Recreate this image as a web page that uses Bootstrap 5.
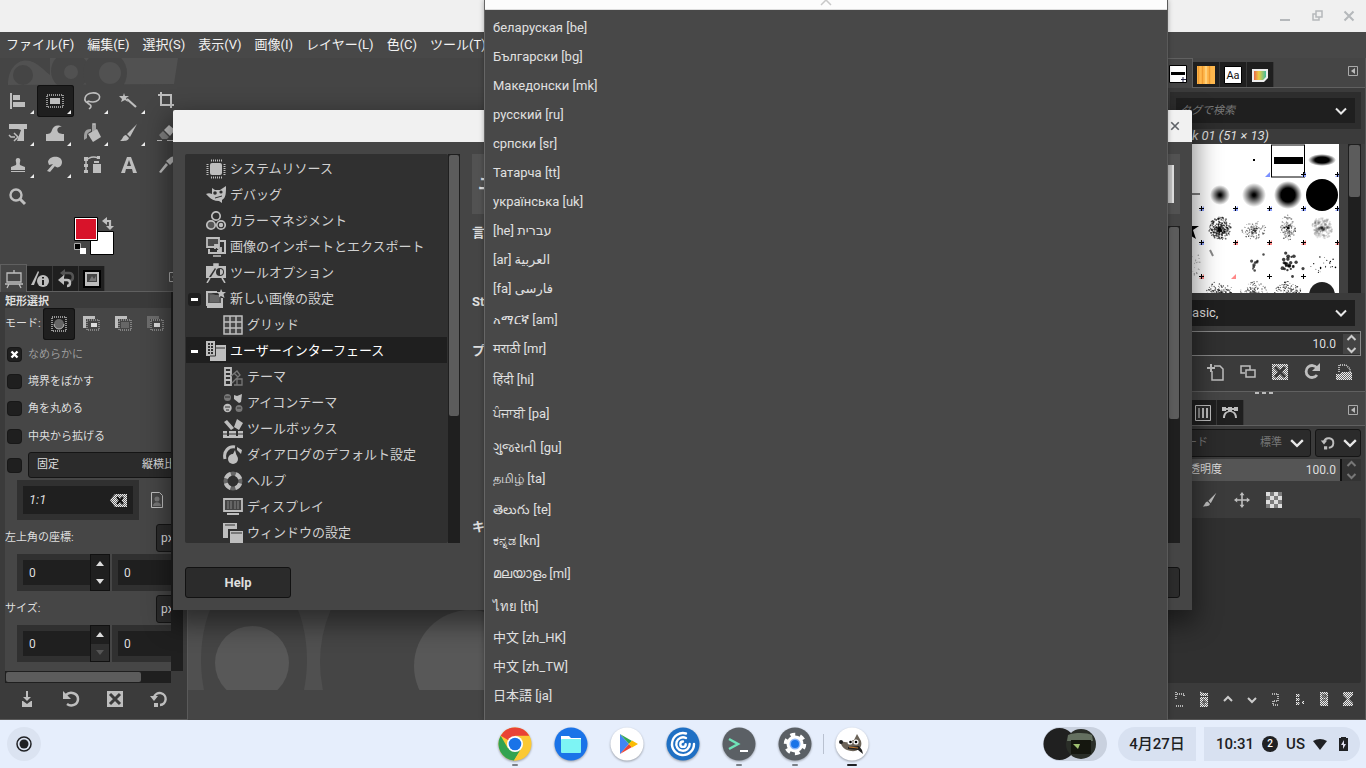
<!DOCTYPE html>
<html lang="ja">
<head>
<meta charset="utf-8">
<meta name="viewport" content="width=device-width, initial-scale=1">
<title>GIMP</title>
<link href="https://cdn.jsdelivr.net/npm/bootstrap@5.3.0/dist/css/bootstrap.min.css" rel="stylesheet">
<script src="https://cdn.jsdelivr.net/npm/bootstrap@5.3.0/dist/js/bootstrap.bundle.min.js"></script>
<style>
body{font-family:Roboto,"Noto Sans CJK JP","Noto Sans","DejaVu Sans",sans-serif;font-size:13px;line-height:20px;background:#454545;color:#dedede;height:100vh;overflow:hidden}
button,input,select{font:inherit;color:inherit}
button{background:none;border:0;padding:0}
svg{display:block;flex:none}
.ic{width:20px;height:20px;fill:#bebebe;stroke:none;color:#bebebe}
.sm{width:16px;height:16px}
.titlebar{height:32px;background:#f0f0f0;color:#b5b8bb;padding-right:1px}
.titlebar button{width:32px;display:flex;justify-content:center}
.menubar{height:26px;background:#484848;padding-left:6px;gap:13px;color:#f2f2f2}
.menubar a{color:inherit;text-decoration:none;white-space:nowrap}
.shelf{height:48px;background:#e6eefc;color:#202124;position:relative;z-index:30}
.dock-l{width:188px}
.dock-r{width:200px;background:#3b3b3b;border-right:1px solid #555;border-bottom:1px solid #555;font-size:12px}
.wm{height:27px}
.tools{display:grid;grid-template-columns:repeat(5,37px);grid-auto-rows:32px}
.tool{position:relative;display:flex;align-items:center;padding-left:8px;border-radius:3px}
.tool.more::after{content:"";position:absolute;right:3px;bottom:3px;border-left:4px solid transparent;border-bottom:4px solid #eee}
.on{background:#1f1f1f;box-shadow:inset 0 0 0 1px #111;border-radius:3px}
.swatches{height:51px;padding:1px 0 0 72px}
.tabs{height:28px;border-bottom:1px solid #606060;background:#454545;align-items:flex-end}
.tabs button{width:26px;height:25px;background:#1f1f1f;border-right:1px solid #383838;display:flex;align-items:center;justify-content:center}
.tabs button.cur{height:28px;width:27px;background:#454545;border:1px solid #606060;border-bottom:0;margin-bottom:-1px}
.dock-r .tabs button{width:27px}
.dock-r .tabs button.cur{height:30px;padding-right:4px}
.opts{background:#3b3b3b;padding-left:5px;font-size:11px;line-height:16px;border-right:1px solid #5a5a5a;border-bottom:1px solid #5a5a5a}
.optbody{background:#464646;overflow:hidden;width:166px}
.optbody>*{flex:none}
.strip{background:#3b3b3b;height:16px;font-weight:700;line-height:20px}
.modes button{width:32px;height:32px;display:flex;align-items:center;justify-content:center}
.tick{appearance:none;width:13px;height:13px;background:#1f1f1f;border-radius:3px;box-shadow:0 0 0 1px #181818;margin:0 7px 0 3px;flex:none}
.tick:checked{background:#1f1f1f url("data:image/svg+xml,%3Csvg xmlns='http://www.w3.org/2000/svg' viewBox='0 0 13 13'%3E%3Cpath d='M3.500 3.500l6 6m0-6l-6 6' stroke='white' stroke-width='2.400'/%3E%3C/svg%3E")}
.row28{height:28px;display:flex;align-items:center}
.row28 label{padding-top:2px}
.combo{background:#2b2b2b;border:1px solid #151515;border-radius:3px;display:flex;align-items:center}
.combo.unit{width:60px;height:28px;font-size:12px}
.field{background:#1f1f1f;border:6px solid #303030;padding:0 6px;color:#dedede;border-radius:0;min-width:0;font-size:12px}
.spin{width:20px;background:#1f1f1f;border:1px solid #111}
.spin button{height:50%;display:flex;align-items:center;justify-content:center;width:100%}
.spinrow{height:37px;margin-top:2px}
.hbar{height:12px;background:#1f1f1f;width:166px}
.hbar div{width:135px;height:10px;background:#5c5c5c;border-radius:2px;margin:1px}
.foot{height:36px;padding-bottom:4px}
.foot button{width:44px;display:flex;justify-content:center}
.canvas-art{height:100px;margin-bottom:30px}
.dialog-w{position:absolute;left:173px;right:174px;top:110px;height:500px;background:#454545;box-shadow:0 10px 24px 4px rgba(0,0,0,.45);z-index:10}
.dlg-title{height:32px;background:#f1f1f1;border-radius:2px 2px 0 0;color:#5f6368}
.dlg-body{padding:12px;gap:12px}
.tree{width:263px;height:389px;background:#303030;overflow:hidden;padding:1px;border-radius:2px}
.tree button{height:26px;width:100%;display:flex;align-items:center;text-align:left;gap:4px;padding:2px 0 0 2px;color:#d0d0d0}
.tree .exp{width:13px;height:13px;background:#1f1f1f;border-radius:3px;display:flex;align-items:center;justify-content:center;margin-right:1px}
.tree .exp::before{content:"";width:7px;height:3px;background:#fff}
.tree .pad{width:13px;margin-right:1px}
.tree .sub .pad{width:30px}
.tree .sel{background:#1f1f1f;color:#fff}
.vbar{width:12px;background:#1f1f1f;padding:1px 1px 0}
.vbar div{background:#5c5c5c;border-radius:2px}
.dbtn{width:106px;height:31px;background:#2b2b2b;border:1px solid #121212;border-radius:3px;font-weight:700;color:#dedede}
.prefhead{height:60px;background:#525252;padding:0 6px;font-size:17px;font-weight:700}
.prefhead i{width:40px;height:38px;background:#bebebe;border-right:2px solid #ddd}
.secs{font-weight:700}
.popup{position:absolute;left:484px;right:198px;top:0;bottom:48px;background:#484848;border-left:1px solid #666;border-right:1px solid #5a5a5a;z-index:20;box-shadow:0 0 5px rgba(0,0,0,.3)}
.scrollup{height:10px;background:#fcfcfc;border-bottom:1px solid #ddd;width:100%;display:flex;justify-content:center;align-items:flex-start}
.lang{height:29px;width:100%;padding:0 8px 1px;display:flex;align-items:flex-end;color:#e0e0e0;line-height:20px}
.lang.h31{height:31px}.lang.h33{height:33px}.lang.h34{height:34px}
.tagbox{height:37px;width:191px;background:#1f1f1f;border:6px solid #2d2d2d}
.tagbox input{background:none;border:0;width:155px;padding:0 0 0 4px;font-style:italic;font-size:11px;outline:0}
.tagbox input::placeholder{color:#777;opacity:1}
.bname{width:103px;height:15px;line-height:14px;font-size:13px;white-space:nowrap}
.dsel{background:#1f1f1f;height:26px;width:185px;margin-top:7px;padding:0 8px 0 14px;font-size:13px}
.opac{background:#555;height:22px;padding-left:12px;font-size:11px}
.iconrow button{width:32px;display:flex;justify-content:center}
.iconrow.tight button{width:24px}
.app{width:56px;height:48px;display:flex;flex-direction:column;align-items:center;padding-top:7px;gap:3px}
.app svg{width:34px;height:34px;filter:drop-shadow(0 1px 1px rgba(0,0,0,.35))}
.app::after{content:"";width:6px;height:2px;background:transparent;border-radius:1px}
.app.run::after{background:#7a7f87}
.app.act::after{background:#202124;width:10px}
.sep{width:1px;height:20px;background:#b9c1d0}
.pill{background:#d8e1f1;height:34px;font-size:15px;font-weight:500;color:#202124}
.launch{width:34px;height:34px;border-radius:50%;background:#dbe3f1;margin-left:7px;display:flex;align-items:center;justify-content:center}
.nbadge{width:16px;height:16px;border-radius:50%;background:#202124;color:#fff;font-size:10px;line-height:16px;text-align:center}
</style>
</head>
<body class="d-flex flex-column position-relative">
<svg width="0" height="0" class="position-absolute">
<defs>
<pattern id="dz" width="2" height="2" patternUnits="userSpaceOnUse"><rect width="2" height="2" fill="#666"/><path d="M0 0h1v1H0zM1 1h1v1H1z" fill="#eee"/></pattern>
<symbol id="align" viewBox="0 0 20 20"><path d="M2 2h2v16H2zM5 4h7v5H5zM5 11h12v5H5z"/></symbol>
<symbol id="rect" viewBox="0 0 20 20"><path d="M2 4h16v12H2z" fill="none" stroke="currentColor" stroke-width="1.500" stroke-dasharray="1 1"/><path d="M5 7h10v6H5z"/></symbol>
<symbol id="lasso" viewBox="0 0 20 20"><path d="M6 12C1 10 2 3 10 2c10-1 10 8 1 9-3 0-5-1-5-1m0 0c-2 3 3 3 3 5s-1 2-2 3" fill="none" stroke="currentColor" stroke-width="1.600"/></symbol>
<symbol id="wand" viewBox="0 0 20 20"><path d="M5 2l1 3 4 0-3 2 2 4-3-2-4 2 1-3-3-3 4 0z"/><path d="M8 8l9 8" stroke="currentColor" stroke-width="2.200"/></symbol>
<symbol id="crop" viewBox="0 0 20 20"><path d="M5 1v13h13M2 4h13v13" fill="none" stroke="currentColor" stroke-width="2"/></symbol>
<symbol id="unified" viewBox="0 0 20 20"><path d="M1 1h18v5h-3v12H9l4-11-3-1H1z"/><path d="M1 12l2 2h4M6 10l4 4-4 4" fill="none" stroke="currentColor" stroke-width="1.500"/></symbol>
<symbol id="warp" viewBox="0 0 20 20"><path d="M1 18v-7c4 0 5-1 6-4 1-4 6-6 10-3-3-1-6 2-4 5 1 2 6 2 6 2v7z"/></symbol>
<symbol id="bucket" viewBox="0 0 20 20"><path d="M6 11l9-5 4 8-8 5-2-3z"/><path d="M11 10V1h2v8" fill="none" stroke="currentColor" stroke-width="1.500"/><path d="M9 6c-7 0-7 4-7 11l3-2c0-4 0-5 4-7z" opacity=".75"/></symbol>
<symbol id="brush" viewBox="0 0 20 20"><path d="M18 1L8 11l3 3zM7 12c-3 0-3 4-6 6 5 0 8 0 9-3z"/></symbol>
<symbol id="eraser" viewBox="0 0 20 20"><path d="M8 7l5-5 6 5-5 6z"/><path d="M3 12l4-4 6 6-2 2H6z" opacity=".5"/><path d="M1 17h5v1H1zM11 17h8v1h-8z"/></symbol>
<symbol id="stamp" viewBox="0 0 20 20"><path d="M8 4a2.500 2.500 0 0 1 4 0c1 2-1 4 0 6l5 2v3H3v-3l5-2c1-2-1-4 0-6zM3 16h14v1H3z"/></symbol>
<symbol id="smudge" viewBox="0 0 20 20"><path d="M3 7C4 0 17 0 17 7c0 5-5 7-7 4l-5 6-3-1 6-7-4 1z"/></symbol>
<symbol id="pathi" viewBox="0 0 20 20"><path d="M4 4v14M4 6c2-4 8-5 12-3" fill="none" stroke="currentColor" stroke-width="1.500"/><path d="M2 2h4v4H2zM2 9h4v3H2zM2 15h4v3H2zM15 1h3v3h-3zM12 6h5v2h-5zM11 9h8v9h-8z"/></symbol>
<symbol id="texti" viewBox="0 0 20 20"><path d="M2 18L8 2h4l6 16h-4l-1-4H7l-1 4zM8 11h4l-2-6z"/></symbol>
<symbol id="picker" viewBox="0 0 20 20"><path d="M19 1l-4 1-5 4 4 4 5-5zM10 8l2 2-7 8-2-1z"/></symbol>
<symbol id="zoomi" viewBox="0 0 20 20"><circle cx="8" cy="8" r="5.500" fill="none" stroke="currentColor" stroke-width="2.400"/><path d="M12 12l5 5" stroke="currentColor" stroke-width="3"/></symbol>
<symbol id="easel" viewBox="0 0 20 20"><path d="M3 4h14v9H3zM10 1v3M1 15h18M5 15l-2 4M15 15l2 4" fill="none" stroke="currentColor" stroke-width="1.300"/></symbol>
<symbol id="info" viewBox="0 0 20 20"><path d="M1 16L8 2l1 1-5 13z"/><circle cx="13" cy="12" r="6"/><path d="M12 8h2v1.500h-2zM12 11h2v5h-2z" fill="#1f1f1f"/></symbol>
<symbol id="hist" viewBox="0 0 20 20"><path d="M8 4h5c5 0 5 7 1 8" fill="none" stroke="#555" stroke-width="2.500"/><path d="M9 0v8L4 4z" fill="#555"/><path d="M6 11h5c4 0 4 6 0 6" fill="none" stroke="currentColor" stroke-width="2.500"/><path d="M2 11l6-5v10z"/></symbol>
<symbol id="pic" viewBox="0 0 20 20"><path d="M1 1h18v18H1z" fill="#000"/><path d="M3 3h14v14H3z"/><path d="M5 5h10v8H5z" fill="#454545"/><path d="M7 12l3-5 2 3 2-3v5z" fill="#777"/></symbol>
<symbol id="selr" viewBox="0 0 20 20"><path d="M3 3h14v14H3z" fill="none" stroke="currentColor" stroke-width="1.500" stroke-dasharray="1 1"/><circle cx="10" cy="10" r="5" fill="#666"/><path d="M5 10a5 5 0 0 0 10 0" fill="none" stroke="currentColor"/></symbol>
<symbol id="chip" viewBox="0 0 20 20"><rect x="4" y="4" width="12" height="12" rx="2"/><path d="M5 1.500h11M5 18.500h11" stroke="currentColor" stroke-width="2" stroke-dasharray="1 1"/><path d="M1.500 5v11M18.500 5v11" stroke="currentColor" stroke-width="2" stroke-dasharray="1 1"/></symbol>
<symbol id="wilber" viewBox="0 0 20 20"><path d="M0 9c2-1 4-1 6 0l0-6 3 2h5l6-4c0 7 0 12-4 14l0 3-3-2c-5 0-8-2-10-4z"/><circle cx="9" cy="8" r="1.800" fill="#303030"/><circle cx="15" cy="7" r="1.600" fill="#303030"/><path d="M9 13l7-2" stroke="#303030"/></symbol>
<symbol id="rgb" viewBox="0 0 20 20"><g fill="none" stroke="currentColor" stroke-width="1.700"><circle cx="10" cy="5" r="4.200"/><circle cx="5" cy="14" r="4.200" fill="#555"/><circle cx="15" cy="14" r="4.200"/></g><circle cx="15" cy="14" r="2.200"/></symbol>
<symbol id="impexp" viewBox="0 0 20 20"><path d="M3 12v4h16V4h-5" fill="none" stroke="currentColor" stroke-width="2"/><path d="M1 1h12v9H1z" fill="#4b4b4b" stroke="currentColor" stroke-width="1.800"/><path d="M7 19h8" stroke="currentColor" stroke-width="1.500"/><path d="M9 8l6 6m0-4v4h-4M9 12V8h4" fill="none" stroke="currentColor" stroke-width="1.800"/></symbol>
<symbol id="topt" viewBox="0 0 20 20"><path d="M0 3h20v12H0z"/><path d="M3 14L9 5l1 1-5 8z" fill="#303030"/><circle cx="14" cy="9" r="4" fill="#303030"/><path d="M14 6a3 3 0 0 1 0 6z"/><path d="M8 1h4v2H8zM4 15l-3 5M16 15l3 5" stroke="currentColor" stroke-width="1.500"/></symbol>
<symbol id="newimg" viewBox="0 0 20 20"><path d="M1 3h10M1 2v14h15V9" fill="#555" stroke="currentColor" stroke-width="2"/><path d="M1 14h16v5H1zM15 0l1.500 3H20l-2.500 2 1 4L15 7l-3 2 1-4-3-2h4z"/><path d="M4 6h9v7H4z" fill="#666"/></symbol>
<symbol id="grid" viewBox="0 0 20 20"><path d="M1 1h18v18H1zM7 1v18M13 1v18M1 7h18M1 13h18" fill="#484848" stroke="currentColor" stroke-width="1.500"/></symbol>
<symbol id="uii" viewBox="0 0 20 20"><path d="M0 0h9v15H0z"/><path d="M2 3h5M2 6h5M2 9h5M2 12h5" stroke="#303030" stroke-width="2" stroke-dasharray="2 1"/><path d="M9 4h11v16H4v-5h5z"/><path d="M10 7h9M9.500 4v11H4" stroke="#333" fill="none"/></symbol>
<symbol id="theme" viewBox="0 0 20 20"><path d="M2 1h6v17H2zM2 5h6M2 9h6M2 13h6" fill="none" stroke="currentColor" stroke-width="1.800"/><path d="M8 9l6-5 3 4-8 8M11 18h8v-6h-5M14 12v6M11 6l4 4" fill="none" stroke="#777" stroke-width="1.300"/></symbol>
<symbol id="icoth" viewBox="0 0 20 20"><circle cx="4.500" cy="4.500" r="3.500" fill="#777"/><path d="M11 2l3 1 5-2-1 8-2 1-5-4z"/><circle cx="4.500" cy="15" r="4.200"/><circle cx="16" cy="15.500" r="3.500" fill="#777"/><path d="M2 4h5M2 14h5M3 17h3M14 15h4" stroke="#303030"/></symbol>
<symbol id="tbox" viewBox="0 0 20 20"><path d="M0 12h20v7H0zM1 3l3-2 7 8-3 2zM11 8L14 0l6 4-4 7z"/><path d="M0 15h20" stroke="#303030"/><path d="M5 12v5M14 12v5" stroke="#303030" stroke-width="2"/></symbol>
<symbol id="reset2" viewBox="0 0 20 20"><path d="M2 14C0 6 6 1 12 2" fill="none" stroke="currentColor" stroke-width="3"/><circle cx="10" cy="14" r="5"/><path d="M9 11l3-6 2 7zM14 2l5 3-1 4-4-4z"/></symbol>
<symbol id="helpi" viewBox="0 0 20 20"><circle cx="10" cy="10" r="7.500" fill="none" stroke="#666" stroke-width="4"/><circle cx="10" cy="10" r="7.500" fill="none" stroke="currentColor" stroke-width="4" stroke-dasharray="6.800 5" stroke-dashoffset="-2.500"/></symbol>
<symbol id="disp" viewBox="0 0 20 20"><path d="M1 2h18v12H1z" fill="#444" stroke="currentColor" stroke-width="1.800"/><path d="M5 4v8M8 4v8M12 4v8M15 4v8" stroke="#777" stroke-width="1.300"/><path d="M4 16h12v2H4z"/></symbol>
<symbol id="wins" viewBox="0 0 20 20"><path d="M0 0h14v6H5v9H0z"/><path d="M7 8h13v12H7z"/><path d="M2 2h10M8 10h11" stroke="#333"/></symbol>
<symbol id="save" viewBox="0 0 20 20"><path d="M9 2h2v6h3l-4 4-4-4h3zM5 12h1l4 3 4-3h1v5H5zM5 16h10v2H5z"/></symbol>
<symbol id="undo" viewBox="0 0 20 20"><path d="M5 6c4-4 12-2 12 4s-7 8-11 5" fill="none" stroke="currentColor" stroke-width="2.500"/><path d="M2 2v8h8z"/></symbol>
<symbol id="del" viewBox="0 0 20 20"><path d="M2 2h16v16H2z"/><path d="M5 5l10 10M15 5L5 15" stroke="#3b3b3b" stroke-width="3"/></symbol>
<symbol id="reset" viewBox="0 0 20 20"><path d="M5 8a6 6 0 1 1 6 8" fill="none" stroke="currentColor" stroke-width="2.400"/><path d="M1 7h8l-4 5zM5 14h4v4H5z"/></symbol>
<symbol id="redo" viewBox="0 0 20 20"><path d="M15 13a6 6 0 1 1 0-7" fill="none" stroke="currentColor" stroke-width="2.800"/><path d="M18 1v8h-8z"/></symbol>
<symbol id="newdoc" viewBox="0 0 20 20"><path d="M8 4h6l3 3v11H6V9" fill="none" stroke="currentColor" stroke-width="1.500"/><path d="M4 2h2v3h3v2H6v3H4V7H1V5h3z"/></symbol>
<symbol id="dup" viewBox="0 0 20 20"><path d="M7 11H3V4h9v4M8 8h9v7H8z" fill="none" stroke="currentColor" stroke-width="1.500"/></symbol>
<symbol id="openi" viewBox="0 0 20 20"><path d="M5 10V3h7l4 4v3" fill="none" stroke="#ddd" stroke-width="1.500" stroke-dasharray="1 1"/><path d="M2 12h4l2-2h10v8H2z" fill="url(#dz)"/></symbol>
<symbol id="menuarr" viewBox="0 0 12 12"><path d="M1.500 1.500h9v9h-9z" fill="none" stroke="#aaa"/><path d="M8 3v6L4 6z" fill="#bbb"/></symbol>
<symbol id="chev" viewBox="0 0 12 12"><path d="M1 3.500l5 5 5-5" fill="none" stroke="#e8e8e8" stroke-width="2"/></symbol>
<symbol id="ud" viewBox="0 0 10 20"><path d="M1 6l4-4 4 4M1 14l4 4 4-4" fill="none" stroke="currentColor" stroke-width="2"/></symbol>
<symbol id="movei" viewBox="0 0 20 20"><path d="M10 0l3 4h-2v5h5V7l4 3-4 3v-2h-5v5h2l-3 4-3-4h2v-5H4v2L0 10l4-3v2h5V4H7z"/></symbol>
<symbol id="cx" viewBox="0 0 12 12"><path d="M1.500 1.500l9 9m0-9l-9 9" stroke="currentColor" stroke-width="2"/></symbol>
</defs>
</svg>

<header class="titlebar d-flex align-items-center justify-content-end flex-shrink-0">
  <button aria-label="最小化"><svg width="10" height="12"><path d="M0 9h10v2H0z" fill="currentColor"/></svg></button>
  <button aria-label="元に戻す"><svg width="11" height="12" fill="none" stroke="currentColor" stroke-width="1.500"><path d="M4 1h6v6H4zM4 4H1v6h6V7"/></svg></button>
  <button aria-label="閉じる"><svg width="12" height="12"><use href="#cx"/></svg></button>
</header>
<nav class="menubar d-flex align-items-center flex-shrink-0">
  <a href="#">ファイル(F)</a><a href="#">編集(E)</a><a href="#">選択(S)</a><a href="#">表示(V)</a><a href="#">画像(I)</a><a href="#">レイヤー(L)</a><a href="#">色(C)</a><a href="#">ツール(T)</a>
</nav>

<main class="d-flex flex-fill overflow-hidden">
  <aside class="dock-l d-flex flex-column flex-shrink-0">
    <svg class="wm" width="187" height="27"><path d="M8 27C8 8 20 0 30 3s14 10 20 14V0h128l-4 26z" fill="#515151"/><circle cx="23" cy="17" r="10" fill="#454545"/><circle cx="70" cy="13" r="19" fill="#454545"/><circle cx="71" cy="14" r="7" fill="#515151"/><circle cx="105" cy="15" r="22" fill="#454545"/><circle cx="110" cy="15" r="11" fill="#515151"/></svg>
    <div class="tools">
      <button class="tool more" aria-label="整列"><svg class="ic"><use href="#align"/></svg></button>
      <button class="tool more on" aria-label="矩形選択"><svg class="ic"><use href="#rect"/></svg></button>
      <button class="tool more" aria-label="自由選択"><svg class="ic"><use href="#lasso"/></svg></button>
      <button class="tool more" aria-label="ファジー選択"><svg class="ic"><use href="#wand"/></svg></button>
      <button class="tool more" aria-label="切り抜き"><svg class="ic"><use href="#crop"/></svg></button>
      <button class="tool more" aria-label="統合変形"><svg class="ic"><use href="#unified"/></svg></button>
      <button class="tool more" aria-label="ワープ変形"><svg class="ic"><use href="#warp"/></svg></button>
      <button class="tool more" aria-label="塗りつぶし"><svg class="ic"><use href="#bucket"/></svg></button>
      <button class="tool more" aria-label="ブラシで描画"><svg class="ic"><use href="#brush"/></svg></button>
      <button class="tool" aria-label="消しゴム"><svg class="ic"><use href="#eraser"/></svg></button>
      <button class="tool more" aria-label="スタンプ"><svg class="ic"><use href="#stamp"/></svg></button>
      <button class="tool more" aria-label="にじみ"><svg class="ic"><use href="#smudge"/></svg></button>
      <button class="tool" aria-label="パス"><svg class="ic"><use href="#pathi"/></svg></button>
      <button class="tool" aria-label="テキスト"><svg class="ic"><use href="#texti"/></svg></button>
      <button class="tool" aria-label="スポイト"><svg class="ic"><use href="#picker"/></svg></button>
      <button class="tool" aria-label="ズーム"><svg class="ic"><use href="#zoomi"/></svg></button>
    </div>
    <div class="swatches"><svg width="48" height="42"><path d="M18.500 17.500h23v23h-23z" fill="#fff" stroke="#000"/><path d="M2.500 3.500h23v23h-23z" fill="#fff" stroke="#000"/><path d="M4 5h20v20H4z" fill="#d8132a"/><path d="M2.500 29.500h6v6h-6z" fill="#000" stroke="#aaa"/><path d="M8 34h6v6H8z" fill="#fff"/><path d="M34 7h4v7" fill="none" stroke="#bebebe" stroke-width="2.200"/><path d="M30 7l5-4v8zM38 16l-4-4h8z" fill="#bebebe"/></svg></div>
    <div class="tabs d-flex">
      <button class="cur" aria-label="ツールオプション"><svg class="ic"><use href="#easel"/></svg></button>
      <button aria-label="デバイスの状態"><svg class="ic"><use href="#info"/></svg></button>
      <button aria-label="作業履歴"><svg class="ic"><use href="#hist"/></svg></button>
      <button aria-label="画像"><svg class="ic"><use href="#pic"/></svg></button>
      <span class="flex-fill"></span><svg class="me-2 mb-2" width="12" height="12"><use href="#menuarr"/></svg>
    </div>
    <div class="opts d-flex flex-column flex-fill overflow-hidden">
      <div class="d-flex flex-fill overflow-hidden">
        <div class="optbody d-flex flex-column">
          <div class="strip">矩形選択</div>
          <div class="modes d-flex align-items-center"><span style="width:38px">モード:</span>
            <button class="on" aria-label="置き換え"><svg class="ic"><use href="#selr"/></svg></button>
            <button aria-label="追加"><svg class="ic"><path d="M2 2h12v3H5v9H2z"/><path d="M6 6h12v10H6z" fill="#464646" stroke="#bebebe" stroke-dasharray="1 1"/><path d="M10 9h6v4h-6z" fill="#ddd"/></svg></button>
            <button aria-label="引く"><svg class="ic"><path d="M2 2h12v3H5v9H2z"/><path d="M6 6h12v10H6z" fill="#464646" stroke="#bebebe" stroke-dasharray="1 1"/><path d="M8 8h8v6H8z" fill="#666"/></svg></button>
            <button aria-label="交差"><svg class="ic"><path d="M2 2h12v3H5v9H2z" fill="#6c6c6c"/><path d="M6 6h12v10H6z" fill="#464646" stroke="#bebebe" stroke-dasharray="1 1"/><path d="M9 9h6v4H9z" fill="#ddd"/></svg></button></div>
          <div class="row28"><input class="tick" type="checkbox" id="c1" checked><label for="c1" style="color:#9a9a9a">なめらかに</label></div>
          <div class="row28" style="height:26px"><input class="tick" type="checkbox" id="c2"><label for="c2">境界をぼかす</label></div>
          <div class="row28"><input class="tick" type="checkbox" id="c3"><label for="c3">角を丸める</label></div>
          <div class="row28"><input class="tick" type="checkbox" id="c4"><label for="c4">中央から拡げる</label></div>
          <div class="row28" style="height:30px"><input class="tick" type="checkbox" id="c5" aria-label="固定"><button class="combo flex-shrink-0 px-2 justify-content-between" style="width:156px;height:26px"><span>固定</span><span>縦横比</span></button></div>
          <div class="d-flex align-items-center ps-2 ms-1"><div class="field d-flex align-items-center" style="width:122px;height:40px"><input aria-label="縦横比" value="1:1" class="bg-transparent border-0 p-0 fst-italic w-75 flex-fill" style="font-size:13px"><svg width="17" height="13"><path d="M0 6l5-6h12v13H5z" fill="url(#dz)"/><path d="M7 3l6 7m0-7l-6 7" stroke="#111" stroke-width="2"/></svg></div>
            <svg class="ms-2" width="20" height="20"><path d="M4.500 2.500h8l3 3v12h-11z" fill="none" stroke="#bebebe"/><circle cx="10" cy="9" r="2.500" fill="#777"/><path d="M6 16c0-5 8-5 8 0z" fill="#777"/></svg></div>
          <div class="row28 mt-1"><span style="width:151px" class="flex-shrink-0">左上角の座標:</span><button class="combo unit flex-shrink-0 px-1">px</button></div>
          <div class="spinrow d-flex ms-1 ps-2"><input class="field flex-shrink-0 border-end-0" style="width:73px" value="0" aria-label="X"><div class="spin flex-shrink-0"><button aria-label="増やす"><svg width="8" height="5"><path d="M0 5l4-5 4 5z" fill="#ddd"/></svg></button><button aria-label="減らす"><svg width="8" height="5"><path d="M0 0l4 5 4-5z" fill="#ddd"/></svg></button></div><input class="field flex-shrink-0" style="width:100px;margin-left:2px" value="0" aria-label="Y"></div>
          <div class="row28 mt-1"><span style="width:151px" class="flex-shrink-0">サイズ:</span><button class="combo unit flex-shrink-0 px-1">px</button></div>
          <div class="spinrow d-flex ms-1 ps-2"><input class="field flex-shrink-0 border-end-0" style="width:73px" value="0" aria-label="幅"><div class="spin flex-shrink-0"><button aria-label="増やす"><svg width="8" height="5"><path d="M0 5l4-5 4 5z" fill="#ddd"/></svg></button><button aria-label="減らす" style="background:#303030"><svg width="8" height="5"><path d="M0 0l4 5 4-5z" fill="#555"/></svg></button></div><input class="field flex-shrink-0" style="width:100px;margin-left:2px" value="0" aria-label="高さ"></div>
        </div>
        <div class="vbar"></div>
      </div>
      <div class="hbar d-flex flex-shrink-0"><div></div></div>
      <div class="foot d-flex align-items-center flex-shrink-0">
        <button aria-label="保存"><svg class="ic"><use href="#save"/></svg></button><button aria-label="復元"><svg class="ic"><use href="#undo"/></svg></button><button aria-label="削除"><svg class="ic"><use href="#del"/></svg></button><button aria-label="リセット"><svg class="ic"><use href="#reset"/></svg></button>
      </div>
    </div>
  </aside>

  <section class="flex-fill d-flex flex-column justify-content-end overflow-hidden">
    <svg class="canvas-art" width="980" height="100"><path d="M0 0h980v100H0z" fill="#505050"/><ellipse cx="66" cy="70" rx="53" ry="90" fill="#454545"/><circle cx="64" cy="73" r="37" fill="#585858"/><circle cx="264" cy="72" r="132" fill="#454545"/><circle cx="282" cy="76" r="56" fill="#585858"/></svg>
  </section>

  <aside class="dock-r d-flex flex-column flex-shrink-0">
    <div class="tabs d-flex" style="height:30px">
      <button class="cur" aria-label="ブラシ"><svg width="20" height="20"><path d="M1.500 1.500h17v17h-17z" fill="#fff" stroke="#000"/><path d="M3 8h14v3H3z"/><path d="M15 13v5M13 15.500h5" stroke="#224"/></svg></button>
      <button aria-label="パターン"><svg width="18" height="18"><path d="M0 0h18v18H0z" fill="#ffb84d"/><path d="M1.500 0v18M5.500 0v18M12.500 0v18" stroke="#f09a30" stroke-width="1.500"/><path d="M9 0v18" stroke="#ffcf78" stroke-width="2"/></svg></button>
      <button aria-label="フォント"><svg width="18" height="18"><path d="M.5.500h17v17H.5z" fill="#fff" stroke="#000"/><text x="9" y="13" text-anchor="middle" font-size="11" fill="#111">Aa</text></svg></button>
      <button aria-label="ドキュメント履歴"><svg width="18" height="18"><defs><linearGradient id="lg"><stop stop-color="#e86a4a"/><stop offset=".4" stop-color="#ec4"/><stop offset="1" stop-color="#4b9"/></linearGradient></defs><path d="M1 3h16v9l-4 4H1z" fill="#eee"/><path d="M3 5h12v6l-3 3H3z" fill="url(#lg)"/></svg></button>
      <span class="flex-fill"></span><svg class="mb-2 align-self-center mt-1" style="margin-right:6px" width="12" height="12"><use href="#menuarr"/></svg>
    </div>
    <div class="tagbox mt-1 ms-1 d-flex align-items-center justify-content-between"><input placeholder="タグで検索" aria-label="タグで検索"><svg class="me-2" width="12" height="12"><use href="#chev"/></svg></div>
    <div class="bname fst-italic text-end">Block 01 (51 × 13)</div>
    <div class="d-flex" style="background:#404040">
      <svg id="brushes" width="173" height="149" style="background:#fff"></svg>
      <div class="vbar ms-auto" style="margin-right:4px;width:13px"><div style="height:52px"></div></div>
    </div>
    <button class="dsel ms-1 d-flex align-items-center justify-content-between"><span>Basic,</span><svg width="12" height="12"><use href="#chev"/></svg></button>
    <div class="d-flex align-items-center justify-content-end" style="height:25px;margin:5px 4px 0 0;border:1px solid #8a8a8a;background:#303030"><span style="margin-right:7px">10.0</span><svg width="17" height="20" style="background:#444;color:#ccc"><use href="#ud" width="17"/></svg></div>
    <div class="iconrow d-flex justify-content-end align-items-center" style="height:32px;padding-right:5px">
      <button aria-label="新規"><svg class="ic"><use href="#newdoc"/></svg></button><button aria-label="複製"><svg class="ic"><use href="#dup"/></svg></button><button aria-label="削除"><svg class="ic" style="fill:url(#dz)"><use href="#del"/></svg></button><button aria-label="更新"><svg class="ic"><use href="#redo"/></svg></button><button aria-label="開く"><svg class="ic"><use href="#openi"/></svg></button></div>
    <div style="border-top:1px solid #606060;background:#454545;height:7px;margin-top:3px;padding-right:4px" class="d-flex justify-content-center"><svg width="18" height="4"><path d="M0 0h4v2H0zM7 0h4v2H7zM14 0h4v2h-4z" fill="#bbb"/></svg></div>
    <div class="tabs d-flex" style="padding-left:24px">
      <button aria-label="チャンネル"><svg class="ic"><path d="M2.500 2.500h15v15h-15z" fill="#2b2b2b" stroke="#bebebe"/><path d="M5 5h2v10H5z" fill="#888"/><path d="M9 5h2v10H9zM13 5h2v10h-2z"/></svg></button>
      <button aria-label="パス"><svg class="ic"><path d="M2 4h4v1h2V4h4v1h2V4h4v4h-4V7h-2v1c4 1 5 4 5 7h-2c0-8-10-8-10 0H3c0-3 1-6 5-7V7H6v1H2z"/></svg></button>
      <span class="flex-fill"></span><svg class="mb-2 align-self-center mt-1" style="margin-right:6px" width="12" height="12"><use href="#menuarr"/></svg>
    </div>
    <div class="d-flex gap-1" style="height:28px;margin:3px 4px 2px 0;font-size:11px"><button class="combo flex-fill justify-content-end"><span class="me-auto ps-2" style="color:#777">モード</span><span style="color:#777" class="pe-1">標準</span><svg class="ms-1" style="margin-right:6px" width="14" height="14"><use href="#chev"/></svg></button><button class="combo justify-content-around" style="width:46px" aria-label="モード切替"><svg class="ic sm"><use href="#reset"/></svg><svg width="14" height="14"><use href="#chev"/></svg></button></div>
    <div class="d-flex" style="height:22px;margin-right:4px"><div class="opac flex-fill d-flex align-items-center justify-content-between pe-1"><span>不透明度</span><span style="font-size:12px">100.0</span></div><svg width="21" height="22" style="background:#333;color:#777"><path d="M0 0h2v22H0z" fill="#111"/><use href="#ud" x="3" y="1" width="17" height="20"/></svg></div>
    <div class="iconrow d-flex align-items-center ps-4 ms-1" style="height:37px"><button aria-label="ピクセル"><svg class="ic sm"><use href="#brush"/></svg></button><button aria-label="位置"><svg class="ic sm"><use href="#movei"/></svg></button><button aria-label="透明部分"><svg width="16" height="16"><path d="M0 0h16v16H0z" fill="#7c7c7c"/><path d="M0 0h4v4H0zM8 0h4v4H8zM4 4h4v4H4zM12 4h4v4h-4zM0 8h4v4H0zM8 8h4v4H8zM4 12h4v4H4zM12 12h4v4h-4z" fill="#ddd"/></svg></button></div>
    <div class="flex-fill" style="background:#303030;margin-right:4px;border-radius:2px"></div>
    <div class="iconrow tight d-flex align-items-center justify-content-end" style="height:36px;padding:0 5px 4px 0">
      <button aria-label="新しいレイヤー"><svg width="10" height="16"><path d="M1 1v8M2 3h7v3M1 15h8" fill="none" stroke="#ddd" stroke-dasharray="1 1" stroke-width="1.500"/></svg></button>
      <button aria-label="グループ"><svg width="10" height="16"><path d="M1 0l3 2h5v3H1zM1 6h8v10H1z" fill="url(#dz)"/><path d="M5 8v6M3 11h5" stroke="#444"/></svg></button>
      <button aria-label="上へ"><svg width="10" height="16"><path d="M1 10l4-4 4 4" fill="none" stroke="#ccc" stroke-width="2"/></svg></button>
      <button aria-label="下へ"><svg width="10" height="16"><path d="M1 7l4 4 4-4" fill="none" stroke="#ccc" stroke-width="2"/></svg></button>
      <button aria-label="複製"><svg width="10" height="16"><path d="M1 3h6v7H2v4h6" fill="none" stroke="#ddd" stroke-dasharray="1 1" stroke-width="1.500"/></svg></button>
      <button aria-label="統合"><svg width="10" height="16"><path d="M1 3h4l-1 3H1zM1 7h4l-1 3H1zM1 11h4l-1 3H1zM7 10h2v3H7z" fill="url(#dz)"/></svg></button>
      <button aria-label="マスク"><svg width="10" height="16"><path d="M1 1h8v14H1z" fill="url(#dz)"/><path d="M3 4h4v2H3M3 9h4" fill="none" stroke="#444"/></svg></button>
      <button aria-label="削除"><svg width="10" height="16"><path d="M0 1h10v3L6 8l4 4v3H0v-3l4-4-4-4z" fill="url(#dz)"/></svg></button>
    </div>
  </aside>
</main>

<section class="dialog-w d-flex flex-column" role="dialog" aria-label="GIMPの設定">
  <div class="dlg-title d-flex align-items-center justify-content-end pe-2 flex-shrink-0"><button aria-label="閉じる" class="me-1"><svg width="10" height="10"><use href="#cx"/></svg></button></div>
  <div class="dlg-body d-flex">
    <div class="d-flex flex-shrink-0">
      <div class="tree">
        <button><span class="pad"></span><svg class="ic"><use href="#chip"/></svg>システムリソース</button>
        <button><span class="pad"></span><svg class="ic"><use href="#wilber"/></svg>デバッグ</button>
        <button><span class="pad"></span><svg class="ic"><use href="#rgb"/></svg>カラーマネジメント</button>
        <button><span class="pad"></span><svg class="ic"><use href="#impexp"/></svg>画像のインポートとエクスポート</button>
        <button><span class="pad"></span><svg class="ic"><use href="#topt"/></svg>ツールオプション</button>
        <button><span class="exp"></span><svg class="ic"><use href="#newimg"/></svg>新しい画像の設定</button>
        <button class="sub"><span class="pad"></span><svg class="ic"><use href="#grid"/></svg>グリッド</button>
        <button class="sel"><span class="exp"></span><svg class="ic"><use href="#uii"/></svg>ユーザーインターフェース</button>
        <button class="sub"><span class="pad"></span><svg class="ic"><use href="#theme"/></svg>テーマ</button>
        <button class="sub"><span class="pad"></span><svg class="ic"><use href="#icoth"/></svg>アイコンテーマ</button>
        <button class="sub"><span class="pad"></span><svg class="ic"><use href="#tbox"/></svg>ツールボックス</button>
        <button class="sub"><span class="pad"></span><svg class="ic"><use href="#reset2"/></svg>ダイアログのデフォルト設定</button>
        <button class="sub"><span class="pad"></span><svg class="ic"><use href="#helpi"/></svg>ヘルプ</button>
        <button class="sub"><span class="pad"></span><svg class="ic"><use href="#disp"/></svg>ディスプレイ</button>
        <button class="sub"><span class="pad"></span><svg class="ic"><use href="#wins"/></svg>ウィンドウの設定</button>
      </div>
      <div class="vbar"><div style="height:261px"></div></div>
    </div>
    <div class="flex-fill d-flex flex-column" style="height:389px">
      <div class="prefhead d-flex align-items-center justify-content-between flex-shrink-0"><span>ユーザーインターフェース</span><i></i></div>
      <div class="d-flex flex-fill justify-content-between" style="margin-top:12px">
        <div class="secs"><div style="height:66px;line-height:14px">言語</div><div style="height:49px">Style</div><div style="height:176px">プレビュー</div><div>キーボードショートカット</div></div>
        <div class="vbar"><div style="height:192px"></div></div>
      </div>
    </div>
  </div>
  <div class="d-flex justify-content-between px-2 mx-1" style="margin-top:12px"><button class="dbtn">Help</button><button class="dbtn">OK</button></div>
</section>

<section class="popup" role="listbox" aria-label="言語">
  <button class="scrollup" aria-label="上にスクロール"><svg width="12" height="6"><path d="M1 5l5-5 5 5" fill="none" stroke="#c8c8c8" stroke-width="1.500"/></svg></button>
  <button class="lang" role="option">беларуская [be]</button>
  <button class="lang" role="option">Български [bg]</button>
  <button class="lang" role="option">Македонски [mk]</button>
  <button class="lang" role="option">русский [ru]</button>
  <button class="lang" role="option">српски [sr]</button>
  <button class="lang" role="option">Татарча [tt]</button>
  <button class="lang" role="option">українська [uk]</button>
  <button class="lang" role="option"><bdo dir="ltr">[he]&nbsp;</bdo><bdi>עברית</bdi></button>
  <button class="lang" role="option"><bdo dir="ltr">[ar]&nbsp;</bdo><bdi>العربية</bdi></button>
  <button class="lang" role="option"><bdo dir="ltr">[fa]&nbsp;</bdo><bdi>فارسی</bdi></button>
  <button class="lang h31" role="option">አማርኛ [am]</button>
  <button class="lang" role="option">मराठी [mr]</button>
  <button class="lang h31" role="option">हिंदी [hi]</button>
  <button class="lang h34" role="option">ਪੰਜਾਬੀ [pa]</button>
  <button class="lang h34" role="option">ગુજરાતી [gu]</button>
  <button class="lang h31" role="option">தமிழ் [ta]</button>
  <button class="lang h31" role="option">తెలుగు [te]</button>
  <button class="lang h31" role="option">ಕನ್ನಡ [kn]</button>
  <button class="lang h33" role="option">മലയാളം [ml]</button>
  <button class="lang h33" role="option">ไทย [th]</button>
  <button class="lang h31" role="option">中文 [zh_HK]</button>
  <button class="lang" role="option">中文 [zh_TW]</button>
  <button class="lang" role="option">日本語 [ja]</button>
</section>

<footer class="shelf d-flex align-items-center flex-shrink-0">
  <div class="col"><button class="launch" aria-label="ランチャー"><svg width="16" height="16"><circle cx="8" cy="8" r="7" fill="none" stroke="#202124" stroke-width="1.500"/><circle cx="8" cy="8" r="4.500" fill="#202124"/></svg></button></div>
  <div class="d-flex align-items-center">
    <button class="app run" aria-label="Chrome"><svg viewBox="0 0 34 34"><circle cx="17" cy="17" r="16.500" fill="#fbc934"/><path d="M17 17L2.700 8.700A16.500 16.500 0 0 1 31.300 8.700H17z" fill="#e94235"/><path d="M2.700 8.700l7.200 12.500L17 17l6 5-7 11.500A16.500 16.500 0 0 1 2.700 8.700z" fill="#33a350"/><path d="M17 9h14.500C36 20 28 34 16 33.500l8-13z" fill="#fbc934"/><circle cx="17" cy="17" r="8" fill="#fff"/><circle cx="17" cy="17" r="6.300" fill="#1a73e8"/></svg></button>
    <button class="app" aria-label="ファイル"><svg viewBox="0 0 34 34"><circle cx="17" cy="17" r="16.500" fill="#1a73e8"/><path d="M7 9h8l2 2h10v4H7z" fill="#fff"/><rect x="7" y="12" width="20" height="14" rx="1" fill="#7df4f4"/></svg></button>
    <button class="app" aria-label="Play ストア"><svg viewBox="0 0 34 34"><circle cx="17" cy="17" r="16.500" fill="#fff"/><path d="M10 7v20l9-10z" fill="#4285f4"/><path d="M10 7l12 7-3 3z" fill="#34a853"/><path d="M10 27l12-7-3-3z" fill="#ea4335"/><path d="M22 13.500l6 3.500-6 3.500-3.500-3.500z" fill="#fbbc04"/></svg></button>
    <button class="app" aria-label="スパイラル"><svg viewBox="0 0 34 34"><circle cx="17" cy="17" r="16.500" fill="#1f70c4"/><path d="M20 6.500A11 11 0 1 0 28 17M20 11a6.700 6.700 0 1 0 3.700 6M17 14.500a2.700 2.700 0 1 0 2.700 2.700" fill="none" stroke="#fff" stroke-width="2.400" stroke-linecap="round"/></svg></button>
    <button class="app run" aria-label="ターミナル"><svg viewBox="0 0 34 34"><circle cx="17" cy="17" r="16.500" fill="#5b6065"/><path d="M7 12l9 5-9 5" fill="none" stroke="#6fe3b8" stroke-width="2.500"/><path d="M18 23h8v2h-8z" fill="#fff"/></svg></button>
    <button class="app run" aria-label="設定"><svg viewBox="0 0 34 34"><circle cx="17" cy="17" r="16.500" fill="#5b6065"/><circle cx="17" cy="17" r="9" fill="none" stroke="#fff" stroke-width="4.500" stroke-dasharray="4.700 4.720"/><circle cx="17" cy="17" r="7" fill="#8ab4f8" stroke="#fff" stroke-width="3"/><circle cx="17" cy="17" r="4" fill="#1a73e8"/></svg></button>
    <span class="sep"></span>
    <button class="app act" aria-label="GIMP"><svg viewBox="0 0 34 34"><circle cx="17" cy="17" r="16.500" fill="#fff"/><path d="M5 14c4 0 6 3 9 0l5-1 3-6 4 7c2 7-4 11-10 10S7 21 5 14z" fill="#6b6358"/><circle cx="15" cy="15" r="2.600" fill="#fff"/><circle cx="21" cy="15" r="2.600" fill="#fff"/><circle cx="15.500" cy="15" r="1.300"/><circle cx="21" cy="15" r="1.300"/><path d="M13 20l11-1 3 4 1 4-5-4-10-1z" fill="#222"/><path d="M14 20l9 1" stroke="#c77b30"/><circle cx="6" cy="15" r="2" fill="#222"/></svg></button>
  </div>
  <div class="col d-flex align-items-center justify-content-end">
    <svg width="64" height="34" style="margin-right:11px"><rect width="64" height="34" rx="17" fill="#c9d1df"/><circle cx="16.500" cy="17" r="16" fill="#202020"/><circle cx="38" cy="17" r="15" fill="#2a2e28"/><path d="M25 8c8-3 20-2 24 0l1 6H24z" fill="#647060"/><path d="M28 13h20v14H28z" fill="#15170f"/><path d="M30 17h7l-2 5z" fill="#9fc070"/></svg>
    <button class="pill rounded-start-pill me-2" style="width:78px">4月27日</button>
    <button class="pill rounded-end-pill d-flex align-items-center" style="width:156px;margin-right:6px;padding-left:12px;gap:8px"><span>10:31</span><span class="nbadge">2</span><span>US</span><svg width="14" height="11"><path d="M0 2q7-4 14 0L7 11z" fill="#202124"/></svg><svg width="9" height="14" class="ms-1"><path d="M2 0h5v1h2v13H0V1h2z" fill="#202124"/><path d="M5 3L2 8h2v4l3-5H5z" fill="#dde"/></svg></button>
  </div>
</footer>

<script>
// Fills the brush preview grid with 34px cells.
(function(){
  var s=11;function r(){s=(s*16807)%2147483647;return s/2147483647}
  function X(c){return 20+34*c}
  var o='<defs><radialGradient id="sf"><stop offset=".1" stop-color="#000"/><stop offset="1" stop-color="#000" stop-opacity="0"/></radialGradient><radialGradient id="hd"><stop offset=".5" stop-color="#000"/><stop offset="1" stop-color="#000" stop-opacity="0"/></radialGradient></defs>';
  o+='<rect x="87" y="15" width="2" height="2"/><rect x="105.500" y="1" width="33" height="32" fill="none" stroke="#000"/><path d="M108 13h29v7h-29z"/><ellipse cx="156" cy="16" rx="14" ry="6" fill="url(#hd)"/><path d="M16 50h18" stroke="#000"/>';
  [[54,10],[88,12]].forEach(function(a){o+='<circle cx="'+a[0]+'" cy="51" r="'+a[1]+'" fill="url(#sf)"/>'});
  o+='<circle cx="122" cy="51" r="14" fill="url(#hd)"/><circle cx="156" cy="51" r="16"/><path d="M22 75l3 7h8l-6 4 3 9-8-5z"/>';
  function spray(cx,cy,n,sx,sy,m,op){for(var i=0;i<n;i++){var a=r()*6.283,d=r();o+='<circle cx="'+(cx+Math.cos(a)*d*sx).toFixed(1)+'" cy="'+(cy+Math.sin(a)*d*sy).toFixed(1)+'" r="'+(m*(.5+r()*.5)).toFixed(2)+'" opacity="'+op+'"/>'}}
  spray(54,85,260,11,12,1,.6);spray(88,86,130,12,9,.8,.5);spray(122,84,150,8,13,.8,.5);spray(156,84,200,11,11,1.5,.12);
  spray(24,120,40,12,14,.8,.35);o+='<path d="M44 106l3 6" stroke="#888" stroke-width="2"/>';
  spray(90,119,9,14,12,1.8,.7);spray(124,121,24,14,13,2,.75);spray(156,121,20,15,14,.8,1);
  spray(54,150,170,14,13,.8,.7);spray(88,150,200,14,13,.8,.6);spray(122,150,190,14,13,.8,.7);o+='<circle cx="156" cy="151" r="13" fill="#222"/>';
  [[3,0],[4,0],[0,1],[1,1],[2,1],[3,1],[4,1],[0,2],[1,2],[2,2],[3,2],[4,2],[0,3],[2,3],[3,3]].forEach(function(p){
    var x=X(p[0])+15,y=30+34*p[1],f=p[1]<2||(p[1]==2&&p[0]==0)?'#8ea2ff':'#f88';
    if(!(p[1]==3&&p[0]>1))o+='<path d="M'+(x-2)+' '+(y+3)+'h5v-5z" fill="'+f+'"/>';
    o+='<path d="M'+(x-2)+' '+(y+.5)+'h5M'+(x+.5)+' '+(y-2)+'v5" stroke="#000"/>'});
  o+='<path d="M99 33h5v-5z" fill="#7a90ff"/><path d="M65 135h5v-5z" fill="#f88"/>';
  document.getElementById('brushes').innerHTML=o;
})();
</script>
</body>
</html>
